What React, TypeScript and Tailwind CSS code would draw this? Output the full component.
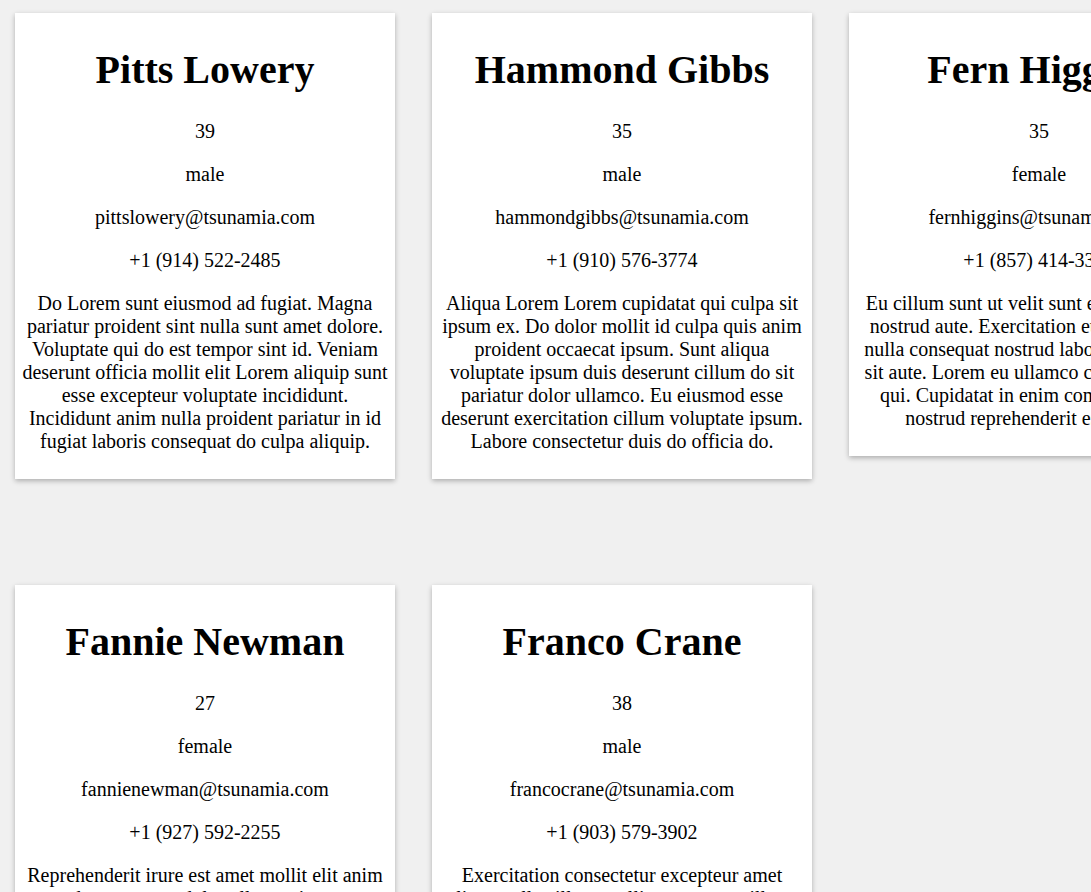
import React from "react";

type Person = {
  name: string;
  age: number;
  gender: string;
  email: string;
  phone: string;
  about: string;
};

const people: Person[] = [
  {
    name: "Pitts Lowery",
    age: 39,
    gender: "male",
    email: "pittslowery@tsunamia.com",
    phone: "+1 (914) 522-2485",
    about:
      "Do Lorem sunt eiusmod ad fugiat. Magna pariatur proident sint nulla sunt amet dolore. Voluptate qui do est tempor sint id. Veniam deserunt officia mollit elit Lorem aliquip sunt esse excepteur voluptate incididunt. Incididunt anim nulla proident pariatur in id fugiat laboris consequat do culpa aliquip.",
  },
  {
    name: "Hammond Gibbs",
    age: 35,
    gender: "male",
    email: "hammondgibbs@tsunamia.com",
    phone: "+1 (910) 576-3774",
    about:
      "Aliqua Lorem Lorem cupidatat qui culpa sit ipsum ex. Do dolor mollit id culpa quis anim proident occaecat ipsum. Sunt aliqua voluptate ipsum duis deserunt cillum do sit pariatur dolor ullamco. Eu eiusmod esse deserunt exercitation cillum voluptate ipsum. Labore consectetur duis do officia do.",
  },
  {
    name: "Fern Higgins",
    age: 35,
    gender: "female",
    email: "fernhiggins@tsunamia.com",
    phone: "+1 (857) 414-3353",
    about:
      "Eu cillum sunt ut velit sunt esse et deserunt nostrud aute. Exercitation eu elit minim id nulla consequat nostrud laboris tempor duis sit aute. Lorem eu ullamco culpa cillum elit qui. Cupidatat in enim commodo ipsum nostrud reprehenderit esse mollit.",
  },
  {
    name: "Fannie Newman",
    age: 27,
    gender: "female",
    email: "fannienewman@tsunamia.com",
    phone: "+1 (927) 592-2255",
    about:
      "Reprehenderit irure est amet mollit elit anim ad consectetur dolor ullamco ipsum commodo. Minim et ipsum velit ullamco sit nisi. Sunt do anim aute pariatur labore laboris.",
  },
  {
    name: "Franco Crane",
    age: 38,
    gender: "male",
    email: "francocrane@tsunamia.com",
    phone: "+1 (903) 579-3902",
    about:
      "Exercitation consectetur excepteur amet aliqua nulla cillum mollit tempor ex cillum. Ad aliquip commodo sint esse velit nostrud.",
  },
];

function Card({ p }: { p: Person }) {
  return (
    <div className="bg-white w-[380px] px-[7px] pt-[27px] pb-[26px] text-center shadow-[0_2px_5px_rgba(0,0,0,0.28)] self-start">
      <h1 className="text-[40px] leading-[46px] font-bold mt-[7px] mb-[27px]">{p.name}</h1>
      <p className="text-[20px] leading-[23px] mb-[20px]">{p.age}</p>
      <p className="text-[20px] leading-[23px] mb-[20px]">{p.gender}</p>
      <p className="text-[20px] leading-[23px] mb-[20px]">{p.email}</p>
      <p className="text-[20px] leading-[23px] mb-[20px]">{p.phone}</p>
      <p className="text-[20px] leading-[23px]">{p.about}</p>
    </div>
  );
}

export default function App() {
  return (
    <div
      className="w-[1091px] h-[892px] overflow-hidden bg-[#f0f0f0] text-black"
      style={{ fontFamily: '"Liberation Serif", "Times New Roman", serif' }}
    >
      <div className="grid grid-cols-[380px_380px_380px] gap-x-[37px] gap-y-[106px] pl-[15px] pt-[13px] w-[1300px]">
        {people.map((p) => (
          <Card key={p.name} p={p} />
        ))}
      </div>
    </div>
  );
}
